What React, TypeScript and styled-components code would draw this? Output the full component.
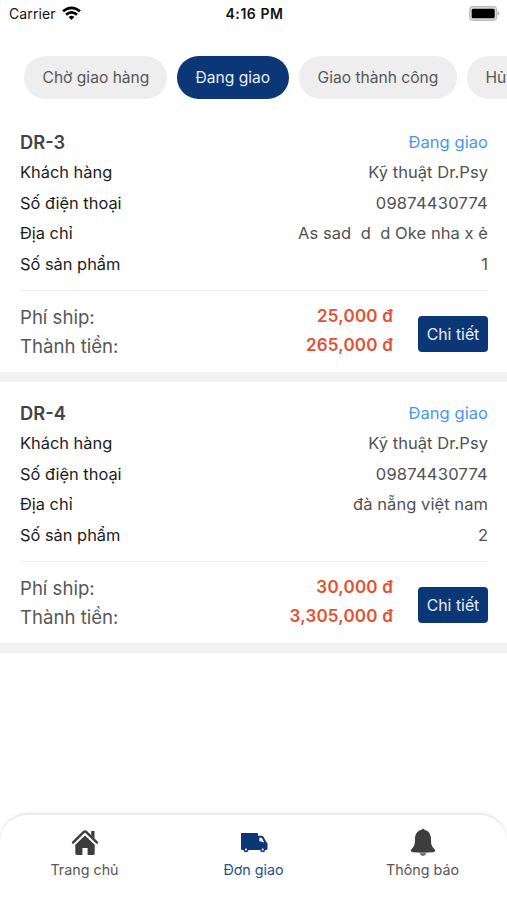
import React from "react";
import styled, { createGlobalStyle } from "styled-components";

const GlobalStyle = createGlobalStyle`
  * { box-sizing: border-box; }
  body { margin: 0; background: #fff; font-family: Inter, "Noto Sans", sans-serif; overflow: hidden; }
`;

const Screen = styled.div`
  width: 507px;
  height: 900px;
  display: flex;
  flex-direction: column;
  overflow: hidden;
  background: #fff;
`;

const StatusBar = styled.header`
  display: grid;
  grid-template-columns: 1fr auto 1fr;
  align-items: center;
  height: 27px;
  padding: 0 7px 0 9px;
  font-size: 14px;
  line-height: 27px;
  color: #111;
  flex: none;
`;

const Carrier = styled.div`
  display: flex;
  align-items: center;
  gap: 6px;
  letter-spacing: 0.1px;
`;

const Clock = styled.div`
  font-weight: 600;
  letter-spacing: 0.55px;
`;

const Battery = styled.div`
  display: flex;
  justify-content: flex-end;
`;

const Tabs = styled.nav`
  display: flex;
  flex: none;
  gap: 10px;
  padding: 29px 0 0 24px;
  height: 84px;
`;

const Tab = styled.button<{ $active?: boolean; $width: number }>`
  flex: none;
  width: ${(p) => p.$width}px;
  height: 43px;
  padding: 0 0 1px 18.5px;
  border: 0;
  border-radius: 22px;
  text-align: left;
  font: 400 15.6px Inter, sans-serif;
  white-space: nowrap;
  background: ${(p) => (p.$active ? "#0b3777" : "#eeeeee")};
  color: ${(p) => (p.$active ? "#e9eef6" : "#575757")};
`;

const Card = styled.article`
  flex: none;
  height: 271px;
  padding: 15px 19px 0 20px;
  border-bottom: 10px solid #f1f1f1;
`;

const Details = styled.dl`
  margin: 0;
  height: 165px;
  border-bottom: 1px solid #efefef;
`;

const Row = styled.div<{ $head?: boolean }>`
  display: flex;
  justify-content: space-between;
  align-items: center;
  height: ${(p) => (p.$head ? 31 : 30.5)}px;
  font-size: 16.5px;
`;

const Label = styled.dt<{ $code?: boolean }>`
  font-weight: ${(p) => (p.$code ? 600 : 400)};
  font-size: ${(p) => (p.$code ? 18.3 : 16.4)}px;
  color: ${(p) => (p.$code ? "#424242" : "#1b1b1b")};
`;

const Value = styled.dd<{ $status?: boolean; $numeric?: boolean }>`
  margin: 0;
  white-space: pre;
  letter-spacing: ${(p) => (p.$numeric ? 0.25 : 0.06)}px;
  color: ${(p) => (p.$status ? "#4b96f0" : "#515151")};
`;

const Footer = styled.div`
  display: flex;
  align-items: flex-start;
  padding-top: 12px;
`;

const FeeLabels = styled.div`
  flex: 1;
  font-size: 18.6px;
  line-height: 28.5px;
  color: #575757;
`;

const Amounts = styled.div`
  margin: -1px 25px 0 0;
  text-align: right;
  font-size: 17px;
  font-weight: 600;
  letter-spacing: 0.2px;
  line-height: 28.5px;
  color: #e65032;
`;

const DetailButton = styled.button`
  width: 70px;
  height: 36px;
  margin-top: 13px;
  padding: 0;
  border: 0;
  border-radius: 4px;
  background: #0b3777;
  color: #e9eef6;
  font: 400 15.8px Inter, sans-serif;
`;

const TabBar = styled.nav`
  display: grid;
  grid-template-columns: repeat(3, 1fr);
  flex: none;
  height: 87px;
  margin-top: auto;
  padding-top: 13px;
  border-top: 2px solid #ececec;
  border-radius: 28px 28px 0 0;
  background: #fff;
  box-shadow: 0 0 3px #e4e4e4;
`;

const NavItem = styled.a<{ $active?: boolean }>`
  display: flex;
  flex-direction: column;
  align-items: center;
  gap: 4px;
  font-size: 14.3px;
  line-height: 20px;
  color: ${(p) => (p.$active ? "#26508f" : "#575757")};
`;

const WifiIcon = () => (
  <svg width="19" height="15" viewBox="0 0 19 15" fill="none" stroke="#000" strokeWidth="2.7">
    <path d="M1 5.3Q9.5-1.7 18 5.3M4 8.6q5.5-4.4 11 0" />
    <path d="M9.5 14 6.6 11q2.900-2.300 5.800 0z" fill="#000" stroke="none" />
  </svg>
);

const BatteryIcon = () => (
  <svg width="31" height="15" viewBox="0 0 31 15">
    <rect x=".7" y=".7" width="27" height="13.600" rx="3.500" fill="#ddd" stroke="#bbb" strokeWidth="1.2" />
    <rect x="2.700" y="2.800" width="23" height="9.500" rx="1.500" fill="#000" />
    <path d="M28.800 5.300q3 2.200 0 4.400z" fill="#aaa" />
  </svg>
);

const HomeIcon = () => (
  <svg width="28" height="28" viewBox="0 0 28 28">
    <path d="M2 14.600 12.600 4.200q1.400-1.300 2.800 0L26 14.600" fill="none" stroke="#3d3d3d" strokeWidth="2.400" strokeLinecap="round" strokeLinejoin="round" />
    <path d="M20.200 3h3.300v7.600L20.200 7.300zM4.300 16.700 14 7.500l9.700 9.200v8.500q0 1.800-1.800 1.800H16.600v-7h-5.200v7H6.100q-1.800 0-1.800-1.800z" fill="#3d3d3d" />
  </svg>
);

const TruckIcon = () => (
  <svg width="28" height="28" viewBox="0 0 28 28">
    <path d="M1.500 5H17q1 0 1 1v1.800h3.700q1 0 1.600.8l3 5.400 1.200 1.200v5.300q0 1.500-1.500 1.500H2q-1 0-1-1V5.500q0-.5.500-.5z" fill="#0b3777" />
    <path d="M19.300 9.800h2.500l2.400 4.700-4.900-1.500z" fill="#fff" />
    <circle cx="6" cy="21.600" r="1.800" fill="#fff" stroke="#0b3777" strokeWidth="1.500" />
    <circle cx="22.700" cy="21.600" r="1.800" fill="#fff" stroke="#0b3777" strokeWidth="1.500" />
  </svg>
);

const BellIcon = () => (
  <svg width="28" height="28" viewBox="0 0 28 28">
    <path d="M12.600 1.800q1.400-2 2.800 0C20 3 22 6.500 22 11c0 6 .8 7.500 3.600 10.200 1.200 1.200.6 2.800-1.600 3-6.500.6-13.500.6-20 0-2.200-.2-2.800-1.800-1.600-3C5.200 18.500 6 17 6 11c0-4.500 2-8 6.600-9.200z" fill="#3d3d3d" />
    <path d="M10.500 25.300h7q-.8 2.700-3.500 2.700t-3.500-2.700z" fill="#666" />
  </svg>
);

const orders = [
  { code: "DR-3", address: "As sad  d  d Oke nha x ẻ", count: 1, ship: "25,000 đ", total: "265,000 đ" },
  { code: "DR-4", address: "đà nẵng việt nam", count: 2, ship: "30,000 đ", total: "3,305,000 đ" },
];

export default function App() {
  return (
    <Screen>
      <GlobalStyle />
      <StatusBar>
        <Carrier>Carrier <WifiIcon /></Carrier>
        <Clock>4:16 PM</Clock>
        <Battery><BatteryIcon /></Battery>
      </StatusBar>
      <Tabs>
        <Tab $width={143}>Chờ giao hàng</Tab>
        <Tab $width={112} $active>Đang giao</Tab>
        <Tab $width={158}>Giao thành công</Tab>
        <Tab $width={90}>Hủy</Tab>
      </Tabs>
      {orders.map((o) => (
        <Card key={o.code}>
          <Details>
            <Row $head><Label $code>{o.code}</Label><Value $status>Đang giao</Value></Row>
            <Row><Label>Khách hàng</Label><Value>Kỹ thuật Dr.Psy</Value></Row>
            <Row><Label>Số điện thoại</Label><Value $numeric>09874430774</Value></Row>
            <Row><Label>Địa chỉ</Label><Value>{o.address}</Value></Row>
            <Row><Label>Số sản phẩm</Label><Value>{o.count}</Value></Row>
          </Details>
          <Footer>
            <FeeLabels><div>Phí ship:</div><div>Thành tiền:</div></FeeLabels>
            <Amounts><div>{o.ship}</div><div>{o.total}</div></Amounts>
            <DetailButton>Chi tiết</DetailButton>
          </Footer>
        </Card>
      ))}
      <TabBar>
        <NavItem><HomeIcon />Trang chủ</NavItem>
        <NavItem $active><TruckIcon />Đơn giao</NavItem>
        <NavItem><BellIcon />Thông báo</NavItem>
      </TabBar>
    </Screen>
  );
}
